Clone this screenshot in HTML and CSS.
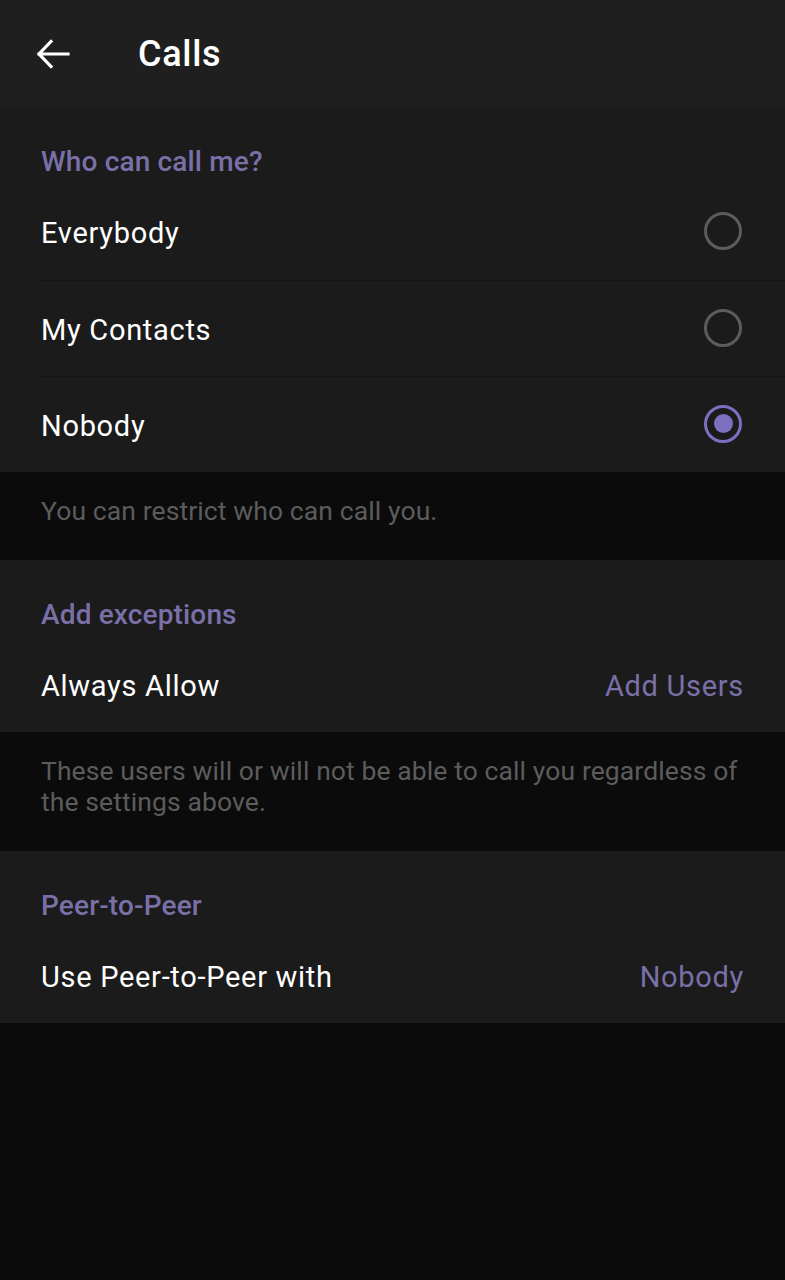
FILE: index.html
```html
<!DOCTYPE html>
<html lang="en">
<head>
  <meta charset="UTF-8" />
  <meta name="viewport" content="width=device-width, initial-scale=1" />
  <title>Calls</title>
  <link rel="stylesheet" href="styles.css">
</head>
<body>

<!-- Üst çubuk -->
<header class="topBar">
  <button class="backBtn" aria-label="Back">
    <svg width="34" height="30" viewBox="0 0 34 30">
      <path d="M3 15 H32 M15 2.5 L3 15 L15 27.5" fill="none" stroke="#fff" stroke-width="3.2" stroke-linecap="square" stroke-linejoin="miter"/>
    </svg>
  </button>
  <h1 class="title">Calls</h1>
</header>

<!-- Kim arayabilir -->
<section class="card">
  <h2 class="cardHeader">Who can call me?</h2>
  <div class="row">
    <span class="rowLabel">Everybody</span>
    <span class="radio"></span>
  </div>
  <div class="row">
    <span class="rowLabel">My Contacts</span>
    <span class="radio"></span>
  </div>
  <div class="row">
    <span class="rowLabel">Nobody</span>
    <span class="radio checked"></span>
  </div>
</section>
<p class="hint">You can restrict who can call you.</p>

<!-- İstisnalar -->
<section class="card">
  <h2 class="cardHeader">Add exceptions</h2>
  <div class="row single">
    <span class="rowLabel">Always Allow</span>
    <span class="rowValue">Add Users</span>
  </div>
</section>
<p class="hint">These users will or will not be able to call you regardless of the settings above.</p>

<!-- P2P -->
<section class="card">
  <h2 class="cardHeader">Peer-to-Peer</h2>
  <div class="row single">
    <span class="rowLabel">Use Peer-to-Peer with</span>
    <span class="rowValue">Nobody</span>
  </div>
</section>

</body>
</html>
```

FILE: styles.css
```css
* { margin: 0; padding: 0; box-sizing: border-box; }
body {
  font-family: Roboto, "Noto Sans", sans-serif;
  background: #0b0b0b;
  color: #fff;
  min-height: 1280px;
}

/* Üst çubuk */
.topBar {
  height: 107px;
  background: #1f1f1f;
  display: flex;
  align-items: center;
  padding-left: 36px;
}

.backBtn {
  background: none;
  border: none;
  width: 34px;
  height: 30px;
  display: flex;
  margin-top: 1px;
}

.title {
  font-size: 36px;
  font-weight: 500;
  margin-left: 68px;
  letter-spacing: 0.7px;
  padding-top: 1px;
}

/* Kartlar */
.card {
  background: #1b1b1b;
}

.cardHeader {
  font-size: 28px;
  font-weight: 500;
  color: #7a70a8;
  padding: 39px 41px 6px;
  line-height: 32px;
  letter-spacing: 0.15px;
}

.row {
  height: 96px;
  margin-left: 41px;
  padding-right: 41px;
  padding-top: 2px;
  display: flex;
  align-items: center;
  justify-content: space-between;
  font-size: 29px;
  letter-spacing: 0.7px;
}

.row.single {
  height: 95px;
}

.row + .row {
  border-top: 1px solid #141414;
}

.rowValue {
  color: #7a70a8;
}

.radio {
  width: 38px;
  height: 38px;
  border-radius: 50%;
  border: 3px solid #5c5c5f;
  margin-right: 2px;
  margin-top: -4px;
  display: flex;
  align-items: center;
  justify-content: center;
}

.radio.checked {
  border-color: #7b70c0;
}

.radio.checked::after {
  content: "";
  width: 19px;
  height: 19px;
  border-radius: 50%;
  background: #7b70c0;
}

.hint {
  background: #0b0b0b;
  color: #5c5c5c;
  font-size: 26.5px;
  line-height: 31px;
  padding: 23px 41px 34px;
  letter-spacing: 0.1px;
}
```
